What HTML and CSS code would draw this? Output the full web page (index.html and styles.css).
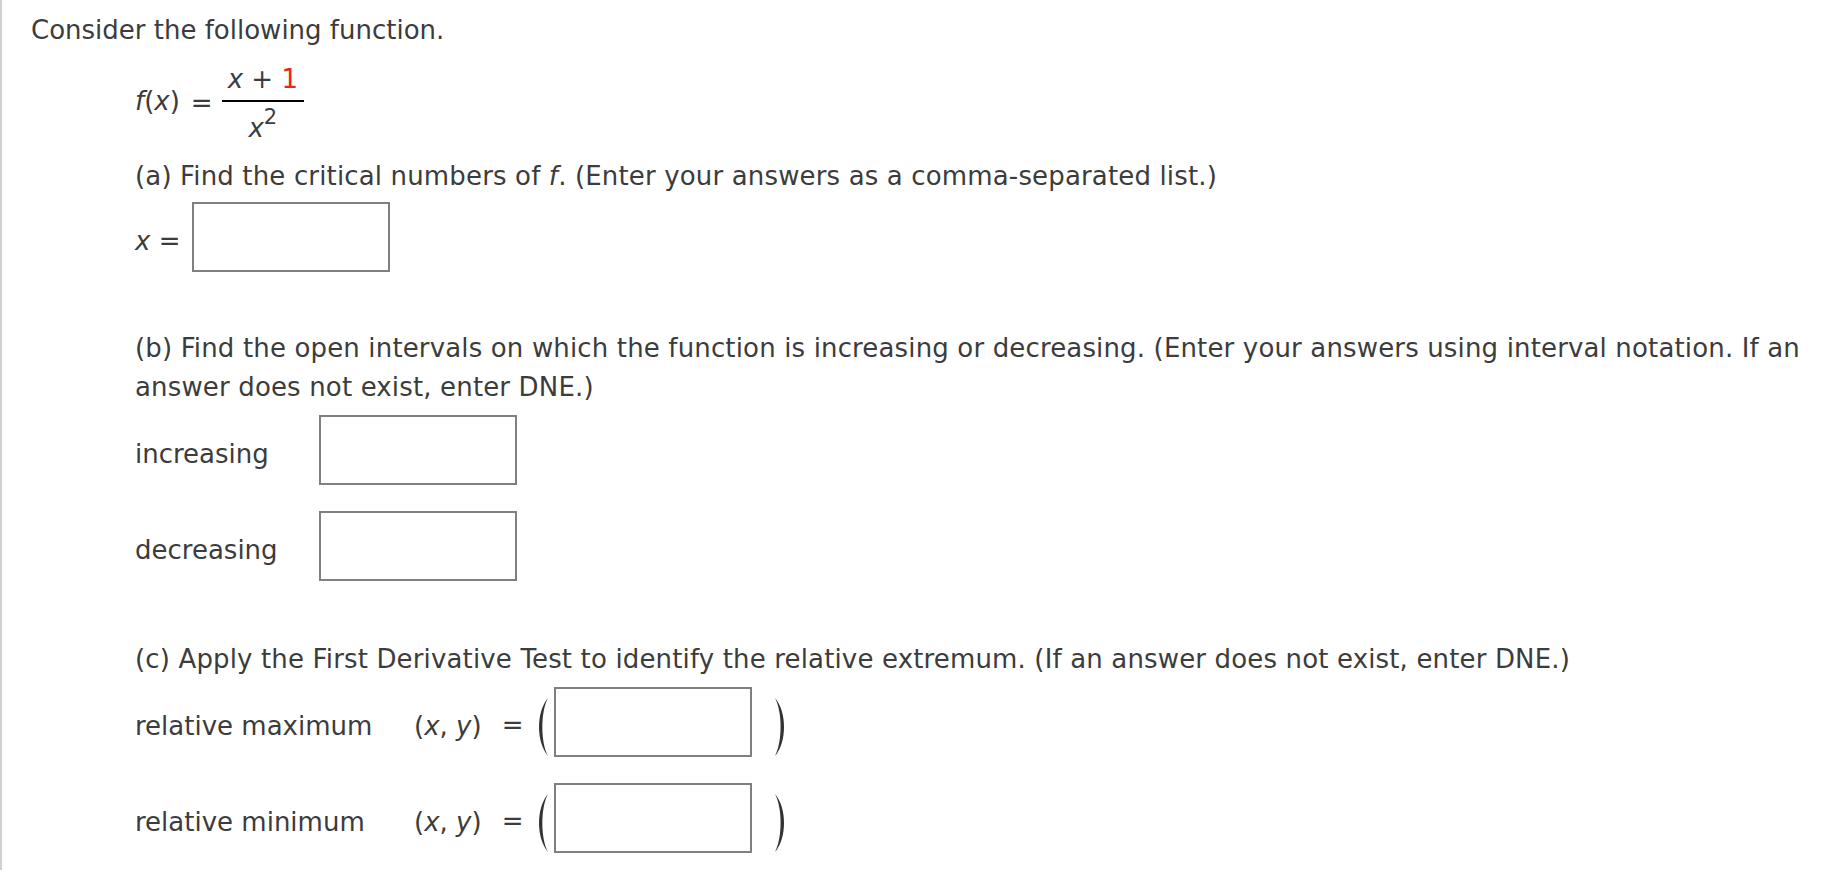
FILE: index.html
```html
<!DOCTYPE html>
<html lang="en">
<head>
<meta charset="utf-8">
<title>Consider the following function</title>
<link rel="stylesheet" href="styles.css">
</head>
<body>
<div class="page">
  <p class="intro">Consider the following function.</p>
  <div class="content">
    <div class="formula">
      <span class="fx"><i>f</i>(<i>x</i>)</span>
      <span class="eq">=</span>
      <span class="frac">
        <span class="num"><i>x</i> + <span class="red">1</span></span>
        <span class="bar"></span>
        <span class="den"><i>x</i><sup class="sup">2</sup></span>
      </span>
    </div>

    <p class="q qa">(a) Find the critical numbers of <i>f</i>. (Enter your answers as a comma-separated list.)</p>
    <div class="row-x">
      <span class="lbl"><i>x</i> =</span>
      <input class="box" type="text" aria-label="x">
    </div>

    <p class="q qb">(b) Find the open intervals on which the function is increasing or decreasing. (Enter your answers using interval notation. If an answer does not exist, enter DNE.)</p>
    <div class="grid-b">
      <span class="lbl">increasing</span>
      <input class="box" type="text" aria-label="increasing">
      <span class="lbl">decreasing</span>
      <input class="box" type="text" aria-label="decreasing">
    </div>

    <p class="q qc">(c) Apply the First Derivative Test to identify the relative extremum. (If an answer does not exist, enter DNE.)</p>
    <div class="grid-c">
      <span class="lbl">relative maximum</span>
      <span class="point">
        <span class="xy">(<i>x</i>, <i>y</i>)</span>
        <span class="eq-pt">=</span>
        <svg class="paren paren-l" width="14" height="58" viewBox="0 0 14 58"><path d="M13 0 C1 14 1 44 13 58 C5.5 44 5.5 14 13 0 Z"/></svg>
        <input class="box" type="text" aria-label="relative maximum">
        <svg class="paren paren-r" width="14" height="58" viewBox="0 0 14 58"><path d="M1 0 C13 14 13 44 1 58 C8.5 44 8.5 14 1 0 Z"/></svg>
      </span>
      <span class="lbl">relative minimum</span>
      <span class="point">
        <span class="xy">(<i>x</i>, <i>y</i>)</span>
        <span class="eq-pt">=</span>
        <svg class="paren paren-l" width="14" height="58" viewBox="0 0 14 58"><path d="M13 0 C1 14 1 44 13 58 C5.5 44 5.5 14 13 0 Z"/></svg>
        <input class="box" type="text" aria-label="relative minimum">
        <svg class="paren paren-r" width="14" height="58" viewBox="0 0 14 58"><path d="M1 0 C13 14 13 44 1 58 C8.5 44 8.5 14 1 0 Z"/></svg>
      </span>
    </div>
  </div>
</div>
</body>
</html>
```

FILE: styles.css
```css
html, body {
  margin: 0;
  padding: 0;
  background: #ffffff;
}

body {
  font-family: "DejaVu Sans", Verdana, sans-serif;
  font-size: 26px;
  line-height: 39px;
  color: #3c3c3c;
}

.page {
  box-sizing: border-box;
  min-height: 870px;
  border-left: 2px solid #d0d0d0;
  padding: 11px 20px 0 29px;
}

.intro {
  margin: 0;
}

.content {
  margin-left: 104px;
}

i {
  font-style: italic;
}

/* formula */
.formula {
  display: flex;
  align-items: flex-start;
  margin-top: 14px;
}

.fx {
  margin-top: 18px;
}

.eq {
  margin-top: 20px;
  margin-left: 11px;
}

.frac {
  display: flex;
  flex-direction: column;
  align-items: stretch;
  margin-left: 9px;
}

.num {
  display: block;
  text-align: center;
  line-height: 30px;
  padding: 0 6px 6px;
  white-space: nowrap;
}

.red {
  color: #e8251e;
}

.bar {
  display: block;
  height: 2px;
  background: #000000;
}

.den {
  display: block;
  text-align: center;
  line-height: 30px;
  padding: 11px 6px 0;
}

.sup {
  font-size: 21px;
  line-height: 0;
  vertical-align: 13px;
}

/* questions */
.q {
  margin: 0;
  letter-spacing: 0.15px;
}

.qa {
  margin-top: 14px;
}

.qb {
  margin-top: 57px;
}

.qc {
  margin-top: 59px;
}

.box {
  box-sizing: border-box;
  width: 198px;
  height: 70px;
  margin: 0;
  padding: 0 6px;
  border: 2px solid #808080;
  border-radius: 0;
  background: #ffffff;
  font: inherit;
  outline: none;
}

.lbl {
  padding-top: 20px;
  white-space: nowrap;
}

.row-x {
  display: grid;
  grid-template-columns: 57px 198px;
  align-items: start;
  margin-top: 6px;
}

.grid-b {
  display: grid;
  grid-template-columns: 184px 198px;
  row-gap: 26px;
  align-items: start;
  margin-top: 8px;
}

.grid-c {
  display: grid;
  grid-template-columns: 279px auto;
  row-gap: 26px;
  align-items: start;
  justify-content: start;
  margin-top: 8px;
}

.point {
  display: flex;
  align-items: flex-start;
}

.xy {
  padding-top: 20px;
}

.eq-pt {
  padding-top: 19px;
  margin-left: 20px;
}

.paren {
  display: block;
  margin-top: 11px;
  fill: #333333;
}

.paren-l {
  margin-left: 12px;
  margin-right: 5px;
}

.paren-r {
  margin-left: 22px;
}
```
